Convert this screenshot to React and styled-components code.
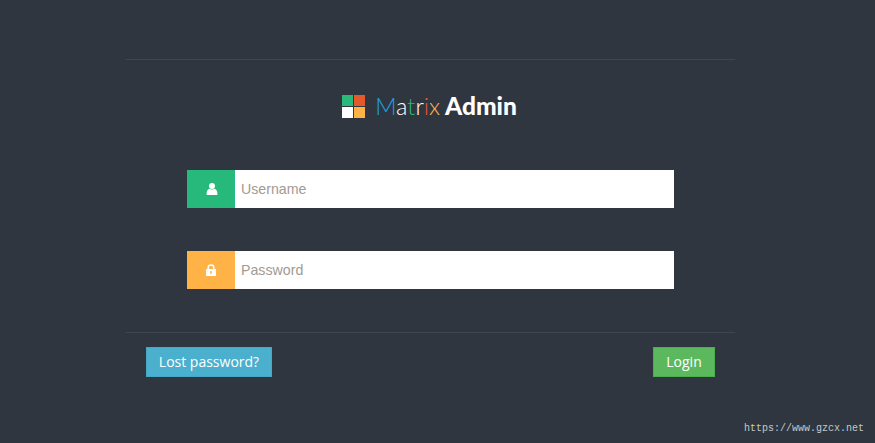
import React from "react";
import styled, { createGlobalStyle } from "styled-components";

const GlobalStyle = createGlobalStyle`
  html, body {
    margin: 0;
    padding: 0;
    height: 100%;
    background: #2f3640;
    overflow: hidden;
  }
`;

const App = () => {
  return (
    <Page>
      <GlobalStyle />
      <Panel>
        <Header>
          <LogoMark width="23" height="23" viewBox="0 0 23 23">
            <rect x="0" y="0" width="11" height="11" fill="#2bb87b" />
            <rect x="12" y="0" width="11" height="11" fill="#e2592c" />
            <rect x="0" y="12" width="11" height="11" fill="#ffffff" />
            <rect x="12" y="12" width="11" height="11" fill="#ffb347" />
          </LogoMark>
          <LogoText>
            <Thin color="#1f9fe0">M</Thin>
            <Thin color="#ffffff">a</Thin>
            <Thin color="#2bb87b">t</Thin>
            <Thin color="#ffffff">r</Thin>
            <Thin color="#e2592c">i</Thin>
            <Thin color="#ffb347">x</Thin>
            <Strong>Admin</Strong>
          </LogoText>
        </Header>
        <Fields>
          <Field>
            <Addon color="#27b97c">
              <UserIcon width="12" height="12" viewBox="0 0 12 12" fill="#fff">
                <circle cx="6" cy="3" r="3" />
                <path d="M0.5 11.2 C0.5 7.8 2 6.2 3.4 5.8 C4.8 6.8 7.2 6.8 8.6 5.8 C10 6.2 11.5 7.8 11.5 11.2 C11.5 11.6 11 12 10.5 12 H1.5 C1 12 0.5 11.6 0.5 11.2 Z" />
              </UserIcon>
            </Addon>
            <Input placeholder="Username" />
          </Field>
          <Field>
            <Addon color="#ffb347">
              <svg width="10" height="12" viewBox="0 0 10 12" fill="none">
                <path d="M2.2 5.5 V3.4 C2.2 1.8 3.4 1 5 1 C6.6 1 7.8 1.8 7.8 3.4 V5.5" stroke="#fff" strokeWidth="1.5" />
                <path d="M0 5 H10 V12 H0 Z M5 7 A1 1 0 0 0 4.4 8.8 V10 H5.6 V8.8 A1 1 0 0 0 5 7 Z" fill="#fff" fillRule="evenodd" />
              </svg>
            </Addon>
            <Input placeholder="Password" type="password" />
          </Field>
        </Fields>
        <Footer>
          <Button color="#4bafce" edge="#46a8c6" wide>Lost password?</Button>
          <Button color="#5cb85c" edge="#4cae4c">Login</Button>
        </Footer>
      </Panel>
      <Watermark>https://www.gzcx.net</Watermark>
    </Page>
  );
};

export default App;

const Page = styled.div`
  position: relative;
  height: 443px;
  padding-top: 59px;
  box-sizing: border-box;
  background: #2f3640;
`;

const Panel = styled.div`
  width: 609px;
  margin-left: 126px;
  border-top: 1px solid #3e4650;
`;

const Header = styled.div`
  display: flex;
  align-items: center;
  justify-content: center;
  gap: 10px;
  height: 92px;
  padding-right: 2px;
`;

const LogoMark = styled.svg`
  flex: none;
`;

const LogoText = styled.div`
  font-family: "Lato", "Liberation Sans", sans-serif;
  font-size: 23.5px;
  line-height: 28px;
  white-space: nowrap;
`;

const Thin = styled.span`
  font-weight: 300;
  color: ${(props) => props.color};
`;

const Strong = styled.span`
  font-size: 24.5px;
  font-weight: 900;
  color: #fff;
  margin-left: 5px;
`;

const Fields = styled.div`
  display: flex;
  flex-direction: column;
  gap: 43px;
  padding: 18px 61px 43px;
`;

const Field = styled.div`
  display: flex;
  height: 38px;
`;

const Addon = styled.div`
  display: flex;
  align-items: center;
  justify-content: center;
  flex: none;
  width: 48px;
  background: ${(props) => props.color};
`;

const UserIcon = styled.svg`
  margin-left: 1px;
`;

const Input = styled.input`
  flex: 1;
  min-width: 0;
  border: none;
  outline: none;
  padding: 0 6px;
  background: #fff;
  font-family: "Liberation Sans", Arial, sans-serif;
  font-size: 14.2px;
  color: #555;
  &::placeholder {
    color: #a39a92;
    opacity: 1;
  }
`;

const Footer = styled.div`
  display: flex;
  justify-content: space-between;
  align-items: flex-start;
  padding: 14px 20px 0;
  border-top: 1px solid #3e4650;
`;

const Button = styled.button`
  height: 30px;
  width: ${(props) => (props.wide ? "126px" : "62px")};
  padding: 0 0 2px;
  border: 1px solid ${(props) => props.edge};
  background: ${(props) => props.color};
  color: #fff;
  font-family: "Open Sans", sans-serif;
  font-size: 14px;
`;

const Watermark = styled.div`
  position: absolute;
  right: 11px;
  bottom: 9px;
  font-family: "Liberation Mono", monospace;
  font-size: 10px;
  color: #c4c8cc;
`;
